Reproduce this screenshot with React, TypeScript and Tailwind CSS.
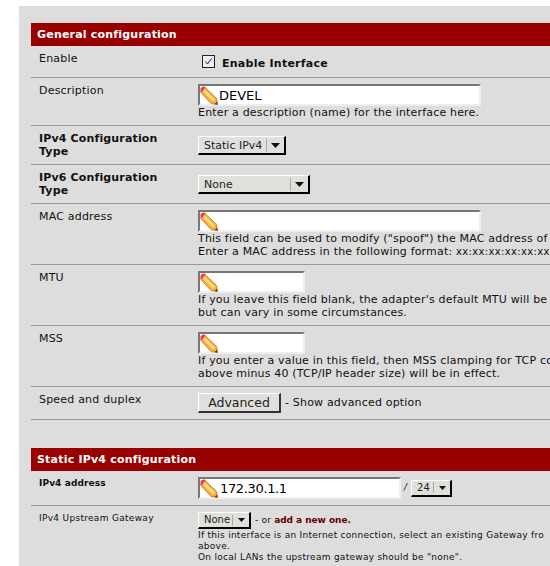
const font = "[font-family:'DejaVu_Sans',sans-serif]";

function Pencil() {
  return (
    <svg className="absolute left-0 top-0 w-[18px] h-[20px]" viewBox="0 0 18 20">
      <path d="M4 0.5 L16.5 12.5 L17.5 18.5 L11 17.5 L0.5 6 Z" fill="#f6b13a" stroke="#d0822a" strokeWidth="1" strokeLinejoin="round" />
      <path d="M3.5 4 L14 14.5" stroke="#fddc85" strokeWidth="2.5" fill="none" />
      <path d="M0.5 5.5 L0.5 2 L3 0.5 L5.5 1.5 L2 6 Z" fill="#e63e5c" />
      <path d="M14.5 18 L17 15.5 L17.7 18.7 Z" fill="#6b4a25" />
    </svg>
  );
}

function TextInput({ width, value, valueClass }: { width: string; value?: string; valueClass?: string }) {
  return (
    <div className={`relative ${width} h-[22px] bg-white border-t-2 border-l-2 border-r-2 border-b-2 border-t-[#777] border-l-[#777] border-r-[#eee] border-b-[#eee]`}>
      <Pencil />
      {value && <span className={`absolute top-[1px] text-[13px] leading-[17px] text-black ${valueClass}`}>{value}</span>}
    </div>
  );
}

function Select({ width, label, small }: { width: string; label: string; small?: boolean }) {
  return (
    <div className={`flex items-center ${width} ${small ? 'h-[17px]' : 'h-[19px]'} bg-[#e0dfdb] border-t border-l border-t-white border-l-white border-r-2 border-b-2 border-r-black border-b-black shrink-0`}>
      <span className={`${small ? 'pl-[5px] text-[10px]' : 'pl-[5px] text-[11px]'} flex-1 whitespace-nowrap text-[#222] leading-none`}>{label}</span>
      <span className={`w-px ${small ? 'h-[11px]' : 'h-[13px]'} bg-white border-l border-[#aaa] shrink-0`} />
      <span className={`${small ? 'w-[16px]' : 'w-[17px]'} flex justify-center shrink-0`}>
        <svg width={small ? 7 : 9} height={small ? 4 : 5} viewBox="0 0 9 5" preserveAspectRatio="none"><path d="M0 0H9L4.5 5Z" fill="#111" /></svg>
      </span>
    </div>
  );
}

function Row({ label, bold, height, children }: { label: React.ReactNode; bold?: boolean; height: string; children: React.ReactNode }) {
  return (
    <div className={`flex ${height} border-b border-[#999]`}>
      <div className={`w-[159px] ml-[8px] shrink-0 pt-[6px] text-[11px] leading-[13px] text-[#111] ${bold ? 'font-bold tracking-[0.15px]' : 'tracking-[0.2px]'}`}>{label}</div>
      <div className="flex-1 min-w-0">{children}</div>
    </div>
  );
}

function Help({ children }: { children: React.ReactNode }) {
  return <div className="text-[11px] leading-[13px] text-[#111] whitespace-nowrap tracking-[0.18px]">{children}</div>;
}

function Header({ children }: { children: React.ReactNode }) {
  return <div className="h-[23px] bg-[#990000] text-white font-bold text-[11px] leading-[23px] pl-[6px] tracking-[0.2px]">{children}</div>;
}

export default function App() {
  return (
    <div className={`w-[550px] h-[566px] overflow-hidden bg-white pl-[19px] pt-[6px] ${font}`}>
      <div className="h-[560px] bg-[#dddddd] pl-[12px] pt-[17px]">
        <Header>General configuration</Header>
        <Row label="Enable" height="h-[32px]">
          <div className="flex items-start pt-[9px] pl-[4px]">
            <span className="w-[13px] h-[13px] border border-[#222] bg-[#eee] flex items-center justify-center">
              <svg width="9" height="9" viewBox="0 0 9 9"><path d="M1.5 4.5 L3.5 7 L7.5 1.5" stroke="#222" strokeWidth="1" fill="none" /></svg>
            </span>
            <span className="ml-[7px] pt-[2px] text-[11px] font-bold leading-[13px] text-[#111] tracking-[0.25px]">Enable Interface</span>
          </div>
        </Row>
        <Row label="Description" height="h-[48px]">
          <div className="pt-[6px]">
            <TextInput width="w-[283px]" value="DEVEL" valueClass="left-[19px]" />
            <Help>Enter a description (name) for the interface here.</Help>
          </div>
        </Row>
        <Row label={<>IPv4 Configuration<br />Type</>} bold height="h-[39px]">
          <div className="pt-[10px]"><Select width="w-[88px]" label="Static IPv4" /></div>
        </Row>
        <Row label={<>IPv6 Configuration<br />Type</>} bold height="h-[39px]">
          <div className="pt-[10px]"><Select width="w-[112px]" label="None" /></div>
        </Row>
        <Row label="MAC address" height="h-[61px]">
          <div className="pt-[6px]">
            <TextInput width="w-[283px]" />
            <Help>This field can be used to modify ("spoof") the MAC address of</Help>
            <Help>Enter a MAC address in the following format: <span className="text-[10px] tracking-[0.35px]">xx:xx:xx:xx:xx:xx</span></Help>
          </div>
        </Row>
        <Row label="MTU" height="h-[61px]">
          <div className="pt-[6px]">
            <TextInput width="w-[107px]" />
            <Help>If you leave this field blank, the adapter's default MTU will be</Help>
            <Help>but can vary in some circumstances.</Help>
          </div>
        </Row>
        <Row label="MSS" height="h-[61px]">
          <div className="pt-[6px]">
            <TextInput width="w-[107px]" />
            <Help>If you enter a value in this field, then MSS clamping for TCP co</Help>
            <Help>above minus 40 (TCP/IP header size) will be in effect.</Help>
          </div>
        </Row>
        <Row label="Speed and duplex" height="h-[33px]">
          <div className="flex items-center pt-[6px]">
            <span className="w-[83px] h-[20px] bg-[#e0dfdb] border-t border-l border-t-white border-l-white border-r-2 border-b-2 border-r-[#333] border-b-[#333] text-[12.5px] leading-[18px] text-center text-[#222]">Advanced</span>
            <span className="ml-[4px] text-[11px] text-[#111] tracking-[0.18px]">- Show advanced option</span>
          </div>
        </Row>
        <div className="h-[28px]" />
        <Header>Static IPv4 configuration</Header>
        <Row label={<span className="block leading-[12px] text-[9px] tracking-[0.1px]">IPv4 address</span>} bold height="h-[35px]">
          <div className="flex items-center pt-[6px]">
            <TextInput width="w-[203px]" value="172.30.1.1" valueClass="left-[20px] top-[0px] tracking-[-0.35px]" />
            <span className="ml-[3px] text-[9px] italic text-[#111]">/</span>
            <span className="ml-[4px]"><Select width="w-[41px]" label="24" small /></span>
          </div>
        </Row>
        <Row label={<span className="block leading-[12px] text-[9px] tracking-[0.3px]">IPv4 Upstream Gateway</span>} height="h-[62px]">
          <div className="pt-[6px]">
            <div className="flex items-center h-[17px]">
              <Select width="w-[53px]" label="None" small />
              <span className="ml-[4px] text-[9px] text-[#111] tracking-[0.2px]">- or <span className="font-bold text-[#660000] tracking-[-0.05px]">add a new one.</span></span>
            </div>
            <div className="text-[9px] leading-[11px] text-[#111] whitespace-nowrap tracking-[0.27px]">
              <div className="pt-[1px]">If this interface is an Internet connection, select an existing Gateway fro</div>
              <div>above.</div>
              <div>On local LANs the upstream gateway should be "none".</div>
            </div>
          </div>
        </Row>
      </div>
    </div>
  );
}
